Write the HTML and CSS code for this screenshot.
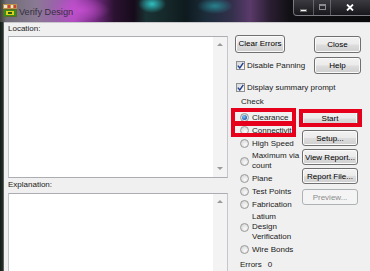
FILE: index.html
```html
<!DOCTYPE html>
<html>
<head>
<meta charset="utf-8">
<title>Verify Design</title>
<link rel="stylesheet" href="styles.css">
</head>
<body>
<div class="window">
  <div class="titlebar">
    <svg class="app-icon" width="14" height="13" viewBox="0 0 14 13">
      <rect x="0" y="0" width="14" height="13" fill="#5a6a28"/>
      <rect x="0" y="0" width="14" height="5" fill="#b89048"/>
      <rect x="1" y="1" width="3" height="3" fill="#f0e0d0"/>
      <rect x="5" y="1" width="2" height="3" fill="#d04030"/>
      <rect x="8" y="1" width="2" height="3" fill="#f0e0d0"/>
      <rect x="11" y="1" width="2" height="3" fill="#d04030"/>
      <rect x="1" y="6" width="12" height="6" fill="#3a8a1c"/>
      <rect x="3" y="7" width="8" height="4" fill="#e0d020"/>
      <rect x="5" y="8" width="4" height="2" fill="#2a5a10"/>
    </svg>
    <span class="title">Verify Design</span>
    <div class="caption-btns">
      <div class="cap cap-min"><span class="min-glyph"></span></div>
      <div class="cap cap-max"><span class="max-glyph"></span></div>
      <div class="cap cap-close">
        <svg width="8" height="7" viewBox="0 0 8 7"><path d="M1 0.5 L7 6.5 M7 0.5 L1 6.5" stroke="#fff" stroke-width="1.8"/></svg>
      </div>
    </div>
  </div>
  <div class="frame">
    <div class="frame-left"></div>
    <div class="client">
      <div class="left-col">
        <div class="field-label">Location:</div>
        <div class="textbox loc-box">
          <div class="scrollbar">
            <span class="arrow-up"></span>
            <span class="arrow-down"></span>
          </div>
        </div>
        <div class="field-label expl-label">Explanation:</div>
        <div class="textbox expl-box">
          <div class="scrollbar">
            <span class="arrow-up"></span>
          </div>
        </div>
      </div>
      <div class="right-col">
        <div class="top-row">
          <button class="btn btn-clear">Clear Errors</button>
          <button class="btn btn-side btn-close">Close</button>
        </div>
        <div class="top-row row2">
          <div class="check-item">
            <span class="checkbox"><svg width="7" height="7" viewBox="0 0 7 7"><path d="M0.8 3.6 L2.8 6 L6.3 0.8" fill="none" stroke="#24418f" stroke-width="1.4"/></svg></span>
            <span class="check-text">Disable Panning</span>
          </div>
          <button class="btn btn-side">Help</button>
        </div>
        <div class="check-item row3">
          <span class="checkbox"><svg width="7" height="7" viewBox="0 0 7 7"><path d="M0.8 3.6 L2.8 6 L6.3 0.8" fill="none" stroke="#24418f" stroke-width="1.4"/></svg></span>
          <span class="check-text">Display summary prompt</span>
        </div>
        <div class="group-label">Check</div>
        <div class="lower">
          <div class="radio-col">
            <div class="radio-row"><span class="radio checked"></span><span class="radio-text">Clearance</span></div>
            <div class="radio-row"><span class="radio"></span><span class="radio-text">Connectivit</span></div>
            <div class="radio-row"><span class="radio"></span><span class="radio-text">High Speed</span></div>
            <div class="radio-row multi"><span class="radio"></span><span class="radio-text">Maximum via<br>count</span></div>
            <div class="radio-row"><span class="radio"></span><span class="radio-text">Plane</span></div>
            <div class="radio-row"><span class="radio"></span><span class="radio-text">Test Points</span></div>
            <div class="radio-row"><span class="radio"></span><span class="radio-text">Fabrication</span></div>
            <div class="radio-row multi"><span class="radio"></span><span class="radio-text">Latium<br>Design<br>Verification</span></div>
            <div class="radio-row"><span class="radio"></span><span class="radio-text">Wire Bonds</span></div>
            <div class="errors">Errors<span class="err-count">0</span></div>
            <div class="mark mark-clearance"></div>
            <div class="mark mark-connect"></div>
          </div>
          <div class="btn-col">
            <button class="btn btn-col-item btn-start">Start</button>
            <button class="btn btn-col-item">Setup...</button>
            <button class="btn btn-col-item">View Report...</button>
            <button class="btn btn-col-item">Report File...</button>
            <button class="btn btn-col-item btn-disabled">Preview...</button>
            <div class="mark mark-start"></div>
          </div>
        </div>
      </div>
    </div>
  </div>
</div>
</body>
</html>
```
FILE: styles.css
```css
* { box-sizing: border-box; }

body {
  margin: 0;
  width: 370px;
  height: 271px;
  overflow: hidden;
  background: #0a0a0c;
  font-family: "Liberation Sans", Arial, sans-serif;
  font-size: 8px;
  color: #1a1a1a;
}

.window {
  width: 370px;
  height: 271px;
  display: flex;
  flex-direction: column;
}

/* ---------- title bar ---------- */
.titlebar {
  height: 22px;
  flex: none;
  display: flex;
  align-items: flex-start;
  background:
    radial-gradient(ellipse 14px 9px at 152px 4px, rgba(50, 200, 200, 0.95), rgba(50, 200, 200, 0) 100%),
    radial-gradient(ellipse 18px 8px at 215px 6px, rgba(40, 150, 160, 0.8), rgba(40, 150, 160, 0) 100%),
    radial-gradient(ellipse 30px 12px at 80px 10px, rgba(200, 80, 210, 0.8), rgba(200, 80, 210, 0) 100%),
    linear-gradient(90deg, #3e4238 0px, #6e6c74 6px, #8a7a94 36px, #9a62aa 56px, #b24cc2 74px, #7a2e88 94px, #2c1232 114px, #160b1a 134px, #1a3234 146px, #16282a 166px, #0e1a1e 186px, #1c2c3a 206px, #34304c 232px, #5a3a6a 250px, #2a1e32 270px, #111014 290px, #0a0a0c 370px);
}

.app-icon {
  margin: 4px 0 0 3px;
  flex: none;
}

.title {
  margin: 6px 0 0 2px;
  font-size: 9.2px;
  line-height: 12px;
  color: #35303e;
  white-space: nowrap;
}

.caption-btns {
  margin-left: auto;
  width: 77px;
  height: 16px;
  display: flex;
  border: 1px solid rgba(210, 210, 220, 0.45);
  border-top: none;
  border-right: none;
  border-radius: 0 0 0 4px;
  background: linear-gradient(#3a3a40, #18181c);
  overflow: hidden;
}

.cap {
  height: 100%;
  display: flex;
  align-items: center;
  justify-content: center;
}

.cap-min { width: 20px; border-right: 1px solid rgba(200, 200, 210, 0.35); }
.cap-max { width: 17px; border-right: 1px solid rgba(200, 200, 210, 0.35); }
.cap-close { flex: 1; padding-right: 2px; }

.min-glyph {
  width: 7px;
  height: 3px;
  margin-top: 5px;
  background: #f4f4f4;
  border: 1px solid #6a6a6a;
}

.max-glyph {
  width: 7px;
  height: 6px;
  margin-top: -2px;
  border: 1px solid #8a8a90;
  border-top-width: 2px;
}

/* ---------- frame ---------- */
.frame {
  flex: 1;
  display: flex;
  min-height: 0;
}

.frame-left {
  width: 4px;
  flex: none;
  background: linear-gradient(90deg, #141c18 0px, #26302a 3px, #8a948e 4px);
}

.client {
  flex: 1;
  display: flex;
  background: #f0f0f0;
  border-top: 1px solid #c8c8cc;
  min-width: 0;
}

/* ---------- left column ---------- */
.left-col {
  width: 226px;
  flex: none;
  padding-left: 4px;
  display: flex;
  flex-direction: column;
}

.field-label {
  height: 12px;
  line-height: 12px;
  white-space: nowrap;
  flex: none;
}

.textbox {
  width: 220px;
  flex: none;
  display: flex;
  justify-content: flex-end;
  background: #ffffff;
  border: 1px solid #abadb3;
  border-left-color: #c4c6cc;
  border-right-color: #c4c6cc;
}

.loc-box {
  margin-top: 1px;
  height: 142px;
}

.expl-label { margin-top: 1px; }

.expl-box {
  margin-top: 2px;
  height: 90px;
}

.scrollbar {
  width: 14px;
  height: 100%;
  background: #f3f3f3;
  display: flex;
  flex-direction: column;
  justify-content: space-between;
  align-items: center;
  padding: 6px 0 7px;
}

.arrow-up {
  width: 0;
  height: 0;
  border-left: 3px solid transparent;
  border-right: 3px solid transparent;
  border-bottom: 3px solid #9a9a9a;
}

.arrow-down {
  width: 0;
  height: 0;
  border-left: 3px solid transparent;
  border-right: 3px solid transparent;
  border-top: 3px solid #9a9a9a;
}

/* ---------- right column ---------- */
.right-col {
  width: 140px;
  flex: none;
  padding-top: 12px;
  display: flex;
  flex-direction: column;
}

.top-row {
  display: grid;
  grid-template-columns: 84px 47px;
  align-items: start;
  height: 18px;
}

.row2 {
  margin-top: 4px;
  height: 17px;
  align-items: center;
}

.btn {
  font-family: "Liberation Sans", Arial, sans-serif;
  font-size: 8px;
  color: #000;
  padding: 0;
  margin: 0;
  height: 17px;
  border: 1px solid #707070;
  border-radius: 3px;
  background: linear-gradient(#f2f2f2 0%, #ebebeb 48%, #dddddd 52%, #cfcfcf 100%);
  box-shadow: inset 0 0 0 1px #fafafa;
  white-space: nowrap;
  text-align: center;
  line-height: 14px;
}

.btn-clear {
  margin-left: 5px;
  width: 50px;
  height: 18px;
}

.btn-side {
  width: 47px;
}

.btn-close { margin-top: 1px; }

.check-item {
  display: flex;
  align-items: center;
  padding-left: 6px;
  height: 12px;
  white-space: nowrap;
}

.row3 { margin-top: 7px; }

.checkbox {
  width: 9px;
  height: 9px;
  flex: none;
  border: 1px solid #8e8f8f;
  background: linear-gradient(135deg, #d4d6da, #fbfbfb);
  display: flex;
  align-items: center;
  justify-content: center;
}

.check-text { margin-left: 2px; }

.group-label {
  margin-top: 3px;
  height: 12px;
  line-height: 12px;
  padding-left: 11px;
}

.lower {
  display: flex;
  align-items: flex-start;
}

.radio-col {
  position: relative;
  margin-left: 1px;
  width: 65px;
  padding-top: 3px;
  flex: none;
}

.radio-row {
  display: flex;
  align-items: center;
  padding-left: 9px;
  height: 13px;
  white-space: nowrap;
}

.radio-row.multi {
  height: auto;
  padding-top: 1px;
  padding-bottom: 1px;
}

.radio {
  width: 9px;
  height: 9px;
  flex: none;
  border-radius: 50%;
  border: 1px solid #9a9a9a;
  background: radial-gradient(circle at 60% 65%, #fafafa 0%, #dcdcdc 70%, #cfcfcf 100%);
  display: flex;
  align-items: center;
  justify-content: center;
}

.radio.checked::after {
  content: "";
  width: 5px;
  height: 5px;
  border-radius: 50%;
  background: radial-gradient(circle at 40% 35%, #8cc4f4 0%, #2a6ec0 60%, #1a4a90 100%);
}

.radio-text {
  margin-left: 3px;
  line-height: 10px;
}

.errors {
  margin-top: 3px;
  padding-left: 9px;
  height: 12px;
  line-height: 12px;
  white-space: nowrap;
}

.err-count { margin-left: 6px; }

.btn-col {
  position: relative;
  margin-left: 2px;
  width: 64px;
  padding-top: 2px;
  display: flex;
  flex-direction: column;
  gap: 3px;
  flex: none;
}

.btn-col-item {
  margin-left: 4px;
  width: 56px;
  height: 16px;
  line-height: 13px;
}

.btn-start { height: 17px; line-height: 14px; }

.btn-disabled {
  margin-top: 2px;
  color: #8c8c8c;
  border-color: #adb2b5;
  background: #f4f4f4;
  box-shadow: none;
}

/* ---------- red annotation boxes ---------- */
.mark {
  position: absolute;
  border: 4px solid #e6001c;
  pointer-events: none;
}

.mark-clearance {
  left: 0;
  top: 0;
  width: 65px;
  height: 18px;
}

.mark-connect {
  left: 0;
  top: 13px;
  width: 65px;
  height: 16px;
}

.mark-start {
  left: 1px;
  top: 1px;
  width: 63px;
  height: 18px;
}
```
